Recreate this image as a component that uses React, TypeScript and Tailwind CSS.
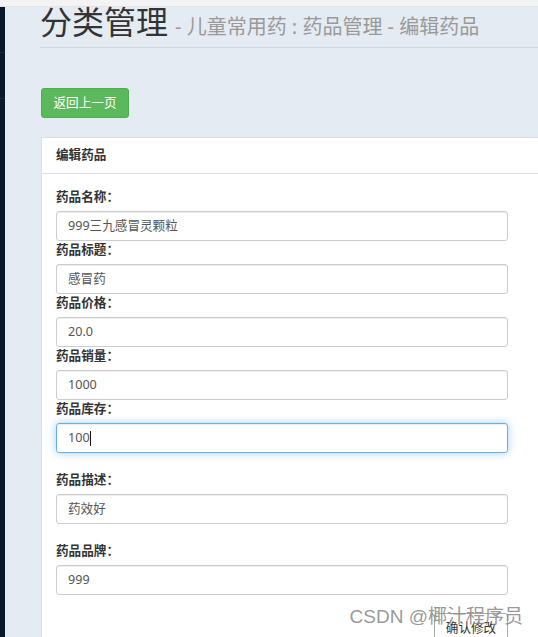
const fields: { label: string; value: string; gap?: boolean; focused?: boolean }[] = [
  { label: '药品名称：', value: '999三九感冒灵颗粒' },
  { label: '药品标题：', value: '感冒药' },
  { label: '药品价格：', value: '20.0' },
  { label: '药品销量：', value: '1000' },
  { label: '药品库存：', value: '100', focused: true },
  { label: '药品描述：', value: '药效好', gap: true },
  { label: '药品品牌：', value: '999', gap: true },
];

const Field: React.FC<{ label: string; value: string; gap?: boolean; focused?: boolean }> = ({
  label,
  value,
  gap,
  focused,
}) => (
  <div className={gap ? 'mt-[18px]' : ''}>
    <label className="mb-[5px] block text-[12.6px] font-bold leading-[18px] text-[#333]">{label}</label>
    <div
      className={
        focused
          ? 'flex h-[30px] items-center rounded-[3px] border border-[#66afe9] px-[11px] text-[12.6px] text-[#555] shadow-[inset_0_1px_1px_rgba(0,0,0,0.075),0_0_8px_rgba(102,175,233,0.6)]'
          : 'flex h-[30px] items-center rounded-[3px] border border-[#ccc] px-[11px] text-[12.6px] text-[#555] shadow-[inset_0_1px_1px_rgba(0,0,0,0.075)]'
      }
    >
      <span>{value}</span>
      {focused && <span className="inline-block h-[15px] w-px bg-[#111]" />}
    </div>
  </div>
);

export default function App() {
  return (
    <div className="relative flex h-[637px] w-[538px] flex-col overflow-hidden bg-[#e5ebf2] font-['Noto_Sans','Noto_Sans_CJK_SC',sans-serif]">
      <div className="h-[7px] shrink-0 border-b border-[#e4e4e4] bg-[#f3f3f3]" />
      <div className="flex min-h-0 flex-1">
        <aside className="flex w-[5px] shrink-0 flex-col bg-[#0b1828]">
          <div className="h-[46px] border-b border-[#1d2b3b]" />
          <div className="h-[46px] border-b border-[#1d2b3b]" />
        </aside>
        <main className="min-w-0 flex-1 pl-[35px]">
          <div className="h-[41px] border-b border-[#cfd5de]">
            <h1 className="whitespace-nowrap text-[32px] leading-[30px] text-[#333]">
              分类管理
              <span className="ml-[7px] text-[20px] text-[#999]">- 儿童常用药 : 药品管理 - 编辑药品</span>
            </h1>
          </div>

          <button className="ml-px mt-[40px] flex h-[30px] w-[88px] items-center justify-center rounded-[3px] border border-[#4cae4c] bg-[#5cb85c] text-[12.6px] text-white">
            返回上一页
          </button>

          <section className="ml-px mt-[19px] w-[520px] border border-[#ddd] bg-white">
            <div className="flex h-[36px] items-center border-b border-[#ddd] pl-[14px] text-[12.6px] font-bold text-[#333]">
              编辑药品
            </div>
            <div className="pl-[14px] pt-[14px]">
              <form className="w-[452px]">
                {fields.map((f) => (
                  <Field key={f.label} {...f} />
                ))}
                <div className="mt-[18px] flex justify-end">
                  <button
                    type="button"
                    className="flex h-[30px] w-[74px] items-center justify-center rounded-[3px] border border-[#aaa] bg-white text-[12.6px] text-[#333]"
                  >
                    确认修改
                  </button>
                </div>
              </form>
            </div>
          </section>
        </main>
      </div>
      <div className="pointer-events-none absolute bottom-[10px] right-[15px] whitespace-nowrap text-[19px] leading-[20px] text-[#8c8c8c]/90 font-['Liberation_Sans','Noto_Sans_CJK_SC',sans-serif]">
        CSDN @椰汁程序员
      </div>
    </div>
  );
}
